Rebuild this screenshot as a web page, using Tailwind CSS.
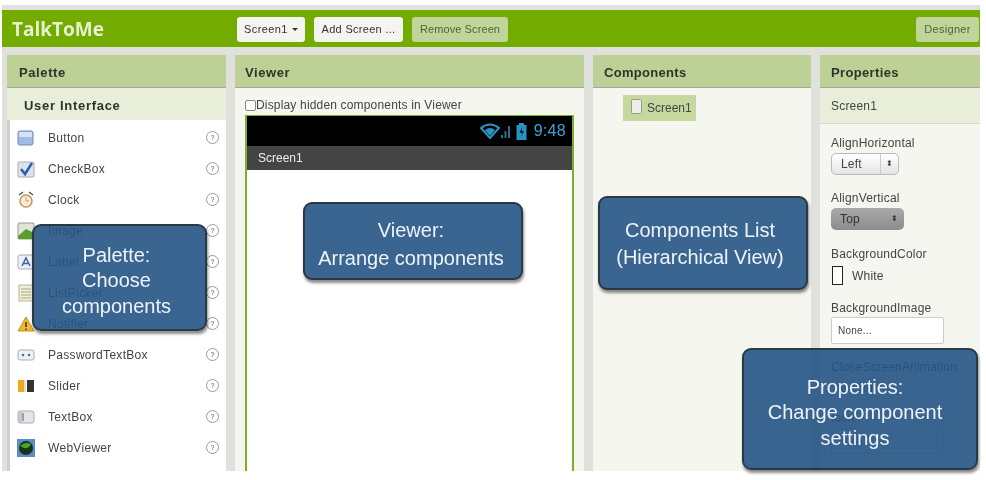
<!DOCTYPE html>
<html>
<head>
<meta charset="utf-8">
<script src="https://cdn.jsdelivr.net/npm/@tailwindcss/browser@4"></script>
</head>
<body class="bg-white">
<div class="relative w-[986px] h-[480px] overflow-hidden bg-white font-['Liberation_Sans',sans-serif] text-[#333] blur-[0.5px]">
  <div class="ml-[2px] w-[978px] h-[466px] mt-[5px] pt-[5px] bg-[#e0e0dc] flex flex-col">
    <!-- top bar -->
    <div class="h-[37px] shrink-0 bg-[#73ab00] flex items-center pl-[10px] pr-[1px]">
      <div class="w-[225px] pt-[2px] font-['Open_Sans',sans-serif] font-bold text-[19px] text-[#e6f0cf]">TalkToMe</div>
      <div class="h-[25px] w-[68px] mr-[9px] mt-[1px] pt-[1px] rounded-[3px] bg-[#f4f4f0] flex items-center justify-center text-[11px] tracking-[0.4px] text-[#333] gap-[4px]">Screen1 <span class="w-0 h-0 border-x-[3px] border-x-transparent border-t-[3px] border-t-[#333]"></span></div>
      <div class="h-[25px] w-[89px] mr-[9px] mt-[1px] pt-[1px] rounded-[3px] bg-[#f4f4f0] flex items-center justify-center text-[11px] tracking-[0.3px] text-[#333]">Add Screen ...</div>
      <div class="h-[25px] w-[96px] mt-[1px] pt-[1px] rounded-[3px] bg-[#c0d59a] flex items-center justify-center text-[11px] tracking-[0.1px] text-[#4f6235]">Remove Screen</div>
      <div class="ml-auto h-[25px] w-[63px] mt-[1px] pt-[1px] rounded-[3px] bg-[#c0d59a] flex items-center justify-center text-[11px] tracking-[0.3px] text-[#4f6235]">Designer</div>
    </div>
    <!-- panels -->
    <div class="flex-1 min-h-0 flex pt-[8px] pl-[5px] gap-[9px]">
      <!-- Palette -->
      <section class="w-[219px] flex flex-col">
        <h2 class="h-[33px] shrink-0 bg-[#bdd196] border-b border-[#a3a89a] pl-[12px] pt-[4px] flex items-center font-bold text-[13px] tracking-[0.6px] text-[#2f3329]">Palette</h2>
        <h3 class="h-[32px] shrink-0 bg-[#e9eedb] pl-[17px] pt-[4px] flex items-center font-bold text-[13px] tracking-[0.7px] text-[#2f3329]">User Interface</h3>
        <ul class="flex-1 bg-white border-l-[3px] border-[#cfcfcb] text-[12px] tracking-[0.3px] text-[#444] pt-[2px]">
          <li class="h-[31px] flex items-center pl-[7px] pr-[7px]">
            <svg class="w-[18px] h-[18px] mr-[13px] shrink-0" viewBox="0 0 18 18"><rect x="1" y="2" width="15" height="14" rx="2" fill="#9dbde6" stroke="#7289a8"/><rect x="2" y="3" width="13" height="5" fill="#d4e2f3"/></svg>
            <span class="flex-1">Button</span>
            <span class="w-[13px] h-[13px] rounded-full border border-[#999] text-[7px] leading-[11px] text-center text-[#555]">?</span>
          </li>
          <li class="h-[31px] flex items-center pl-[7px] pr-[7px]">
            <svg class="w-[18px] h-[18px] mr-[13px] shrink-0" viewBox="0 0 18 18"><rect x="1" y="2" width="16" height="15" rx="1" fill="#dfe2e8" stroke="#a8acb5"/><path d="M4 9 L8 14 L15 3" fill="none" stroke="#2a5db8" stroke-width="2.5"/></svg>
            <span class="flex-1">CheckBox</span>
            <span class="w-[13px] h-[13px] rounded-full border border-[#999] text-[7px] leading-[11px] text-center text-[#555]">?</span>
          </li>
          <li class="h-[31px] flex items-center pl-[7px] pr-[7px]">
            <svg class="w-[18px] h-[18px] mr-[13px] shrink-0" viewBox="0 0 18 18"><path d="M2 4 L6 1 M16 4 L12 1" stroke="#555" stroke-width="1.5"/><circle cx="9" cy="10" r="6" fill="#f8ecd8" stroke="#c9965a" stroke-width="1.5"/><path d="M9 6 V10 H12" fill="none" stroke="#c9965a"/></svg>
            <span class="flex-1">Clock</span>
            <span class="w-[13px] h-[13px] rounded-full border border-[#999] text-[7px] leading-[11px] text-center text-[#555]">?</span>
          </li>
          <li class="h-[31px] flex items-center pl-[7px] pr-[7px]">
            <svg class="w-[18px] h-[18px] mr-[13px] shrink-0" viewBox="0 0 18 18"><rect x="1" y="1" width="16" height="16" rx="1" fill="#dfe5d8" stroke="#999"/><path d="M1 14 L9 7 L17 11 V17 H1Z" fill="#5b9e2a"/></svg>
            <span class="flex-1">Image</span>
            <span class="w-[13px] h-[13px] rounded-full border border-[#999] text-[7px] leading-[11px] text-center text-[#555]">?</span>
          </li>
          <li class="h-[31px] flex items-center pl-[7px] pr-[7px]">
            <svg class="w-[18px] h-[18px] mr-[13px] shrink-0" viewBox="0 0 18 18"><rect x="1" y="2" width="16" height="14" rx="2" fill="#eef0f5" stroke="#a8acb5"/><path d="M5 13 L9 5 L13 13 M6.5 10.5 H11.5" fill="none" stroke="#3a62b0" stroke-width="1.5"/></svg>
            <span class="flex-1">Label</span>
            <span class="w-[13px] h-[13px] rounded-full border border-[#999] text-[7px] leading-[11px] text-center text-[#555]">?</span>
          </li>
          <li class="h-[31px] flex items-center pl-[7px] pr-[7px]">
            <svg class="w-[18px] h-[18px] mr-[13px] shrink-0" viewBox="0 0 18 18"><rect x="2" y="1" width="14" height="16" fill="#f3efd6" stroke="#b5b39a"/><path d="M4 5 H14 M4 8 H14 M4 11 H14 M4 14 H14" stroke="#aaa68a"/></svg>
            <span class="flex-1">ListPicker</span>
            <span class="w-[13px] h-[13px] rounded-full border border-[#999] text-[7px] leading-[11px] text-center text-[#555]">?</span>
          </li>
          <li class="h-[31px] flex items-center pl-[7px] pr-[7px]">
            <svg class="w-[18px] h-[18px] mr-[13px] shrink-0" viewBox="0 0 18 18"><path d="M9 2 L17 16 H1Z" fill="#f2b632" stroke="#c98f1a"/><path d="M9 7 V12 M9 13.5 V15" stroke="#333" stroke-width="1.5"/></svg>
            <span class="flex-1">Notifier</span>
            <span class="w-[13px] h-[13px] rounded-full border border-[#999] text-[7px] leading-[11px] text-center text-[#555]">?</span>
          </li>
          <li class="h-[31px] flex items-center pl-[7px] pr-[7px]">
            <svg class="w-[18px] h-[18px] mr-[13px] shrink-0" viewBox="0 0 18 18"><rect x="1" y="4" width="16" height="10" rx="2" fill="#f0f1f4" stroke="#a8acb5"/><circle cx="6" cy="9" r="1.3" fill="#4a6fa8"/><circle cx="12" cy="9" r="1.3" fill="#4a6fa8"/></svg>
            <span class="flex-1">PasswordTextBox</span>
            <span class="w-[13px] h-[13px] rounded-full border border-[#999] text-[7px] leading-[11px] text-center text-[#555]">?</span>
          </li>
          <li class="h-[31px] flex items-center pl-[7px] pr-[7px]">
            <svg class="w-[18px] h-[18px] mr-[13px] shrink-0" viewBox="0 0 18 18"><rect x="1" y="3" width="6" height="12" fill="#eea91c"/><rect x="7" y="3" width="2" height="12" fill="#ddd"/><rect x="10" y="3" width="7" height="12" fill="#333"/></svg>
            <span class="flex-1">Slider</span>
            <span class="w-[13px] h-[13px] rounded-full border border-[#999] text-[7px] leading-[11px] text-center text-[#555]">?</span>
          </li>
          <li class="h-[31px] flex items-center pl-[7px] pr-[7px]">
            <svg class="w-[18px] h-[18px] mr-[13px] shrink-0" viewBox="0 0 18 18"><rect x="1" y="3" width="16" height="12" rx="2" fill="#e4e5e8" stroke="#a8acb5"/><path d="M6 5 V13" stroke="#888" stroke-width="1.5"/><rect x="2" y="4" width="3" height="10" fill="#c5c7cc"/></svg>
            <span class="flex-1">TextBox</span>
            <span class="w-[13px] h-[13px] rounded-full border border-[#999] text-[7px] leading-[11px] text-center text-[#555]">?</span>
          </li>
          <li class="h-[31px] flex items-center pl-[7px] pr-[7px]">
            <svg class="w-[18px] h-[18px] mr-[13px] shrink-0" viewBox="0 0 18 18"><rect x="0" y="0" width="18" height="18" fill="#5b8bc9"/><circle cx="9" cy="9" r="7" fill="#14351a"/><path d="M3 7 Q8 2 14 5 Q12 10 7 9 Z" fill="#4ea52a"/></svg>
            <span class="flex-1">WebViewer</span>
            <span class="w-[13px] h-[13px] rounded-full border border-[#999] text-[7px] leading-[11px] text-center text-[#555]">?</span>
          </li>
        </ul>
      </section>
      <!-- Viewer -->
      <section class="w-[349px] flex flex-col bg-[#f5f6ef]">
        <h2 class="h-[33px] shrink-0 bg-[#bdd196] border-b border-[#a3a89a] pl-[10px] pt-[4px] flex items-center font-bold text-[13px] tracking-[0.6px] text-[#2f3329]">Viewer</h2>
        <label class="h-[27px] shrink-0 pl-[10px] pt-[7px] flex items-center text-[12px] tracking-[0.17px] text-[#444]"><span class="w-[11px] h-[11px] rounded-[2px] border border-[#888] bg-white"></span>Display hidden components in Viewer</label>
        <div class="flex-1 ml-[10px] mr-[10px] flex flex-col bg-white border-x-2 border-t border-[#7fae2a]">
          <div class="h-[30px] bg-black flex items-center justify-end pr-[6px] gap-[4px] text-[#3ea3d3] text-[16px] tracking-[0.3px]">
            <svg class="w-[32px] h-[18px]" viewBox="0 0 32 18"><path d="M1 6 Q10 -1 19 6 L10 16Z" fill="none" stroke="#2b93c4" stroke-width="2"/><path d="M5 8 Q10 4 15 8 L10 14Z" fill="#2b93c4"/><path d="M21 16 H23 V13 H21Z M24.500 16 H26.500 V9 H24.500Z M28 16 H30 V4 H28Z" fill="#2b6f8f"/></svg>
            <svg class="w-[11px] h-[17px] mr-[3px]" viewBox="0 0 11 17"><rect x="3" y="0" width="5" height="2" fill="#2b93c4"/><rect x="0.500" y="2" width="10" height="15" fill="#2b93c4"/><path d="M6 4 L3.500 10 H6 L5 14 L8 8 H6Z" fill="#0b2a3a"/></svg>
            <span>9:48</span>
          </div>
          <div class="h-[24px] bg-[#444] flex items-center pl-[11px] text-[12px] text-[#eee]">Screen1</div>
          <div class="flex-1 bg-white"></div>
        </div>
      </section>
      <!-- Components -->
      <section class="w-[218px] flex flex-col bg-[#f5f6ef]">
        <h2 class="h-[33px] shrink-0 bg-[#bdd196] border-b border-[#a3a89a] pl-[11px] pt-[4px] flex items-center font-bold text-[13px] tracking-[0.3px] text-[#2f3329]">Components</h2>
        <div class="ml-[30px] mt-[7px] w-[73px] h-[26px] bg-[#c6d8a0] flex items-center pl-[8px] gap-[5px] text-[12px] text-[#444]">
          <svg class="w-[11px] h-[15px] -mt-[4px]" viewBox="0 0 11 15"><rect x="0.500" y="0.500" width="10" height="14" rx="1" fill="#eceee8" stroke="#9a9a8e"/></svg>
          <span>Screen1</span>
        </div>
      </section>
      <!-- Properties -->
      <section class="flex-1 flex flex-col bg-[#f5f6ef] text-[12px] tracking-[0.2px] text-[#444]">
        <h2 class="h-[33px] shrink-0 bg-[#bdd196] border-b border-[#a3a89a] pl-[11px] pt-[4px] flex items-center font-bold text-[13px] tracking-[0.35px] text-[#2f3329]">Properties</h2>
        <div class="h-[36px] shrink-0 bg-[#e9eedb] border-b border-[#d5d9c9] pl-[11px] pt-[1px] flex items-center">Screen1</div>
        <div class="pl-[11px] pt-[11px]">
          <div class="h-[16px] leading-[16px]">AlignHorizontal</div>
          <div class="mt-[2px] w-[68px] h-[22px] rounded-[5px] border border-[#bbb] bg-gradient-to-b from-white to-[#e4e4e4] flex items-center pl-[9px]"><span class="flex-1">Left</span><span class="w-[18px] h-full border-l border-[#ccc] text-center text-[8px] leading-[20px]">⬍</span></div>
          <div class="mt-[15px] h-[16px] leading-[16px]">AlignVertical</div>
          <div class="mt-[2px] w-[73px] h-[22px] rounded-[5px] bg-gradient-to-b from-[#aaa] to-[#8c8c8c] flex items-center pl-[9px] text-[#333]"><span class="flex-1">Top</span><span class="w-[18px] text-center text-[8px]">⬍</span></div>
          <div class="mt-[16px] h-[16px] leading-[16px]">BackgroundColor</div>
          <div class="mt-[4px] flex items-center gap-[9px]"><span class="ml-[1px] w-[11px] h-[19px] bg-white border border-[#222]"></span>White</div>
          <div class="mt-[15px] h-[16px] leading-[16px]">BackgroundImage</div>
          <div class="w-[113px] h-[27px] mt-[1px] bg-white border border-[#ccc] rounded-[2px] flex items-center pl-[6px] text-[10px]">None...</div>
          <div class="mt-[15px] h-[16px] leading-[16px]">CloseScreenAnimation</div>
          <div class="mt-[2px] w-[117px] h-[22px] flex items-center pl-[9px]">Default</div>
          <div class="mt-[11px] h-[16px] leading-[16px]">Icon</div>
          <div class="w-[113px] h-[26px] mt-[2px] border border-[#ccc] flex items-center pl-[6px] text-[10px]">None...</div>
        </div>
      </section>
    </div>
  </div>

  <!-- callouts over the screenshot -->
  <div class="absolute left-[32px] top-[224px] w-[175px] h-[107px] rounded-[9px] border-2 border-[#2b3845] bg-[#245484]/90 shadow-[1px_3px_3px_rgba(0,0,0,0.45)] flex flex-col items-center justify-center pr-[6px] pt-[7px] text-[20px] leading-[25.500px] text-[#eef3f7]"><span>Palette:</span><span>Choose</span><span>components</span></div>
  <div class="absolute left-[303px] top-[202px] w-[220px] h-[78px] rounded-[9px] border-2 border-[#2b3845] bg-[#3a6590] shadow-[1px_3px_3px_rgba(0,0,0,0.45)] flex flex-col items-center justify-center pr-[4px] pt-[5px] text-[20px] leading-[28px] text-[#eef3f7]"><span>Viewer:</span><span>Arrange components</span></div>
  <div class="absolute left-[598px] top-[196px] w-[210px] h-[94px] rounded-[9px] border-2 border-[#2b3845] bg-[#3a6590] shadow-[1px_3px_3px_rgba(0,0,0,0.45)] flex flex-col items-center justify-center pr-[6px] pt-[2px] text-[20px] leading-[27px] text-[#eef3f7]"><span>Components List</span><span>(Hierarchical View)</span></div>
  <div class="absolute left-[742px] top-[348px] w-[236px] h-[122px] rounded-[9px] border-2 border-[#2b3845] bg-[#245484]/90 shadow-[1px_3px_3px_rgba(0,0,0,0.45)] flex flex-col items-center justify-center pr-[10px] pt-[8px] text-[20px] leading-[25.500px] text-[#eef3f7]"><span>Properties:</span><span>Change component</span><span>settings</span></div>
</div>
</body>
</html>
